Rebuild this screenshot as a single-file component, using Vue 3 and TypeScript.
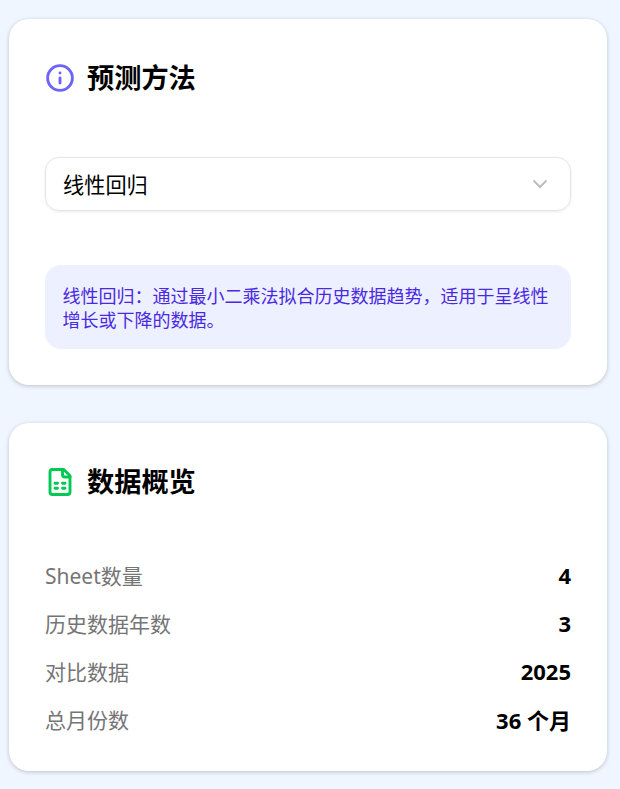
<script setup lang="ts">
const rows: { label: string; value: string }[] = [
  { label: 'Sheet数量', value: '4' },
  { label: '历史数据年数', value: '3' },
  { label: '对比数据', value: '2025' },
  { label: '总月份数', value: '36 个月' },
]
</script>

<template>
  <main class="page">
    <section class="card card-method">
      <h2 class="title">
        <svg class="icon" viewBox="0 0 24 24" fill="none" stroke="#6c63ff" stroke-width="2.3" stroke-linecap="round" stroke-linejoin="round">
          <circle cx="12" cy="12" r="9.9" />
          <path d="M12 16v-4" />
          <path d="M12 8h.01" />
        </svg>
        <span>预测方法</span>
      </h2>
      <div class="select">
        <span>线性回归</span>
        <svg class="chev" viewBox="0 0 16 16" fill="none" stroke="#bdbdbd" stroke-width="2">
          <path d="M1.5 4.5 8 11l6.500-6.500" />
        </svg>
      </div>
      <p class="info">线性回归：通过最小二乘法拟合历史数据趋势，适用于呈线性增长或下降的数据。</p>
    </section>

    <section class="card card-data">
      <h2 class="title">
        <svg class="icon" viewBox="0 0 24 24" fill="none" stroke="#00c853" stroke-width="2.3" stroke-linecap="round" stroke-linejoin="round">
          <path d="M15 2H6a2 2 0 0 0-2 2v16a2 2 0 0 0 2 2h12a2 2 0 0 0 2-2V7z" />
          <path d="M14 2v4a2 2 0 0 0 2 2h4" />
          <path d="M8 13h2M14 13h2M8 17h2M14 17h2" />
        </svg>
        <span>数据概览</span>
      </h2>
      <div class="rows">
        <div v-for="row in rows" :key="row.label" class="row">
          <span class="label">{{ row.label }}</span>
          <span class="value">{{ row.value }}</span>
        </div>
      </div>
    </section>
  </main>
</template>

<style>
html, body { margin: 0; background: #f0f6ff; }
</style>

<style scoped>
.page {
  box-sizing: border-box;
  width: 620px;
  height: 789px;
  padding: 19px 13px 0 9px;
  background: #f0f6ff;
  font-family: "Noto Sans", "Noto Sans CJK SC", sans-serif;
  color: #000;
  display: flex;
  flex-direction: column;
  gap: 38px;
}
.card {
  box-sizing: border-box;
  background: #fff;
  border-radius: 20px;
  box-shadow: 0 1px 4px rgba(0, 0, 0, 0.22);
  padding: 36px;
}
.card-method { height: 366px; }
.card-data { height: 348px; }
.title {
  margin: 0;
  display: flex;
  align-items: center;
  gap: 12px;
  font-size: 27.2px;
  font-weight: 700;
  line-height: 46px;
  height: 46px;
}
.icon { width: 30px; height: 30px; flex: none; }
.select {
  box-sizing: border-box;
  margin-top: 56px;
  height: 54px;
  border: 1px solid #e5e5e5;
  border-radius: 14px;
  box-shadow: 0 1px 3px rgba(0, 0, 0, 0.08);
  padding: 0 22px 0 18px;
  display: flex;
  align-items: center;
  justify-content: space-between;
  font-size: 21.2px;
}
.select span { margin-left: -1px; margin-top: -2px; }
.chev { width: 16px; height: 16px; }
.info {
  margin: 54px 0 0;
  background: #edf0ff;
  border-radius: 16px;
  padding: 19px 18px 17px 17.5px;
  font-size: 18px;
  line-height: 24px;
  color: #4a2ae0;
}
.rows { margin-top: 46px; display: flex; flex-direction: column; }
.row {
  display: flex;
  justify-content: space-between;
  align-items: center;
  height: 48px;
  font-size: 21px;
}
.label { color: #757575; }
.value { font-weight: 700; font-size: 22px; }
</style>
